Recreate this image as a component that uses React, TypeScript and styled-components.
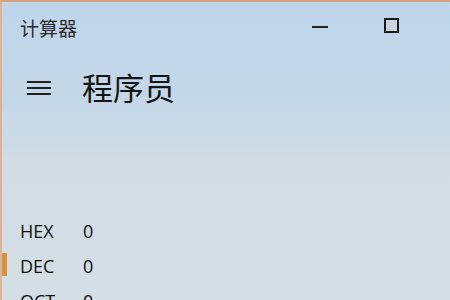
import styled, { createGlobalStyle } from 'styled-components'

const GlobalStyle = createGlobalStyle`
  html, body {
    margin: 0;
    padding: 0;
  }
  body {
    font-family: "Noto Sans CJK SC", "Open Sans", sans-serif;
  }
`

const rows = [
  { label: 'HEX', value: '0' },
  { label: 'DEC', value: '0', active: true },
  { label: 'OCT', value: '0' },
]

export default function App() {
  return (
    <>
      <GlobalStyle />
      <Window>
        <TitleBar>
          <Title>计算器</Title>
          <Controls>
            <MinButton />
            <MaxButton />
          </Controls>
        </TitleBar>
        <Header>
          <Menu>
            <span />
            <span />
            <span />
          </Menu>
          <Mode>程序员</Mode>
        </Header>
        <Radix>
          {rows.map((r) => (
            <Row key={r.label} $active={r.active}>
              <Label>{r.label}</Label>
              <Value>{r.value}</Value>
            </Row>
          ))}
        </Radix>
      </Window>
    </>
  )
}

const Window = styled.div`
  width: 450px;
  height: 300px;
  box-sizing: border-box;
  overflow: hidden;
  border-top: 2px solid #dba27a;
  border-left: 2px solid #d9b49a;
  background: linear-gradient(180deg, #bfd5ea 0%, #c3d7e8 30%, #d2dce4 55%, #d3dee5 100%);
  color: #1a1a1a;
`

const TitleBar = styled.div`
  height: 50px;
  display: flex;
  align-items: center;
  justify-content: space-between;
  padding-left: 18px;
`

const Title = styled.div`
  font-size: 19px;
  line-height: 1;
  color: #2a2a2a;
`

const Controls = styled.div`
  display: flex;
  align-items: center;
  margin-top: -3px;
`

const MinButton = styled.div`
  width: 72px;
  height: 30px;
  display: flex;
  align-items: center;
  justify-content: center;
  &::after {
    content: '';
    width: 16px;
    height: 2px;
    margin-top: 2px;
    background: #222;
  }
`

const MaxButton = styled.div`
  width: 70px;
  height: 30px;
  display: flex;
  align-items: center;
  justify-content: center;
  margin-right: 24px;
  &::after {
    content: '';
    width: 11px;
    height: 11px;
    border: 2px solid #1a1a1a;
    background: #c9d6e2;
  }
`

const Header = styled.div`
  display: flex;
  align-items: center;
  height: 70px;
  padding-left: 25px;
`

const Menu = styled.div`
  width: 24px;
  display: flex;
  flex-direction: column;
  gap: 4px;
  margin-right: 31px;
  margin-top: 2px;
  span {
    display: block;
    height: 2px;
    background: #1f1f1f;
  }
`

const Mode = styled.div`
  font-size: 31px;
  color: #151515;
  line-height: 1;
  margin-top: -2px;
`

const Radix = styled.div`
  margin-top: 91px;
`

const Row = styled.div<{ $active?: boolean }>`
  height: 35px;
  display: flex;
  align-items: center;
  padding-left: 18px;
  position: relative;
  &::before {
    content: '';
    display: ${(p) => (p.$active ? 'block' : 'none')};
    position: absolute;
    left: -2px;
    top: 5px;
    width: 7px;
    height: 23px;
    background: #d9923a;
  }
`

const Label = styled.div`
  font-family: "Open Sans", "Noto Sans", sans-serif;
  font-size: 18px;
  width: 63px;
  color: #111;
`

const Value = styled.div`
  font-family: "Open Sans", "Noto Sans", sans-serif;
  font-size: 18px;
  color: #111;
`
